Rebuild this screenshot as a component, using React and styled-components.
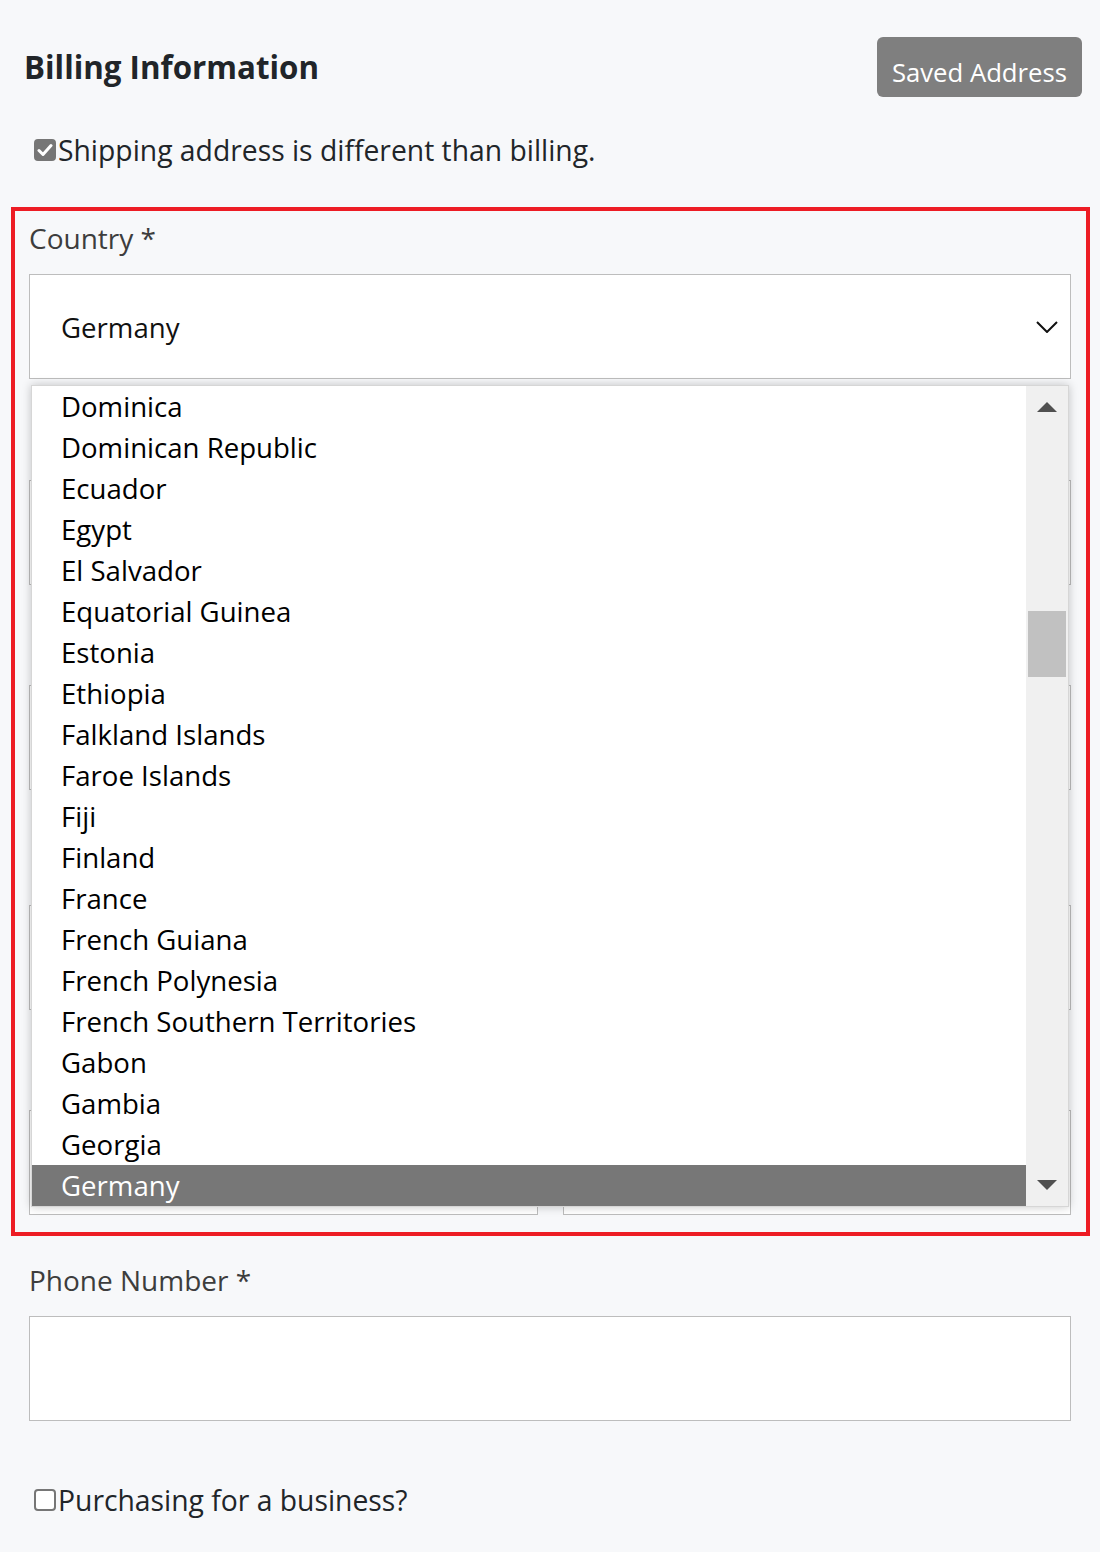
import React from 'react';
import styled, { createGlobalStyle } from 'styled-components';

const GlobalStyle = createGlobalStyle`
  * { box-sizing: border-box; }
  body {
    margin: 0;
    background: #f7f8fa;
    font-family: "Open Sans", "Noto Sans", sans-serif;
    color: #212529;
  }
`;

const Page = styled.div`
  min-height: 100vh;
  padding: 37px 10px 40px 11px;
`;

const Header = styled.div`
  display: flex;
  justify-content: space-between;
  align-items: center;
  height: 60px;
  padding: 0 8px 0 13px;
`;

const Title = styled.h2`
  margin: 0;
  font-size: 31.3px;
  font-weight: 700;
  color: #212529;
`;

const SavedButton = styled.button`
  height: 60px;
  padding: 10px 15px 0;
  border: none;
  border-radius: 6px;
  background: #7f7f7f;
  color: #fff;
  font-family: inherit;
  font-size: 25.7px;
`;

const CheckRow = styled.label`
  display: flex;
  align-items: center;
  height: 36px;
  margin-top: ${p => p.$top}px;
  padding-left: 23px;
  font-size: 28.3px;
  color: #212529;
`;

const Box = styled.span`
  width: 22px;
  height: 22px;
  margin-right: 2px;
  border-radius: 4px;
  display: flex;
  align-items: center;
  justify-content: center;
  background: ${p => (p.$checked ? '#767676' : '#fff')};
  border: 2px solid #767676;
`;

const Frame = styled.div`
  margin-top: 39px;
  border: 4px solid #ed1c24;
  padding: 8px 15px 17px 14px;
`;

const Section = styled.div`
  margin-top: 25px;
  padding: 0 19px 0 18px;
`;

const Group = styled.div`
  margin-top: ${p => p.$top || 0}px;
  position: relative;
`;

const Label = styled.label`
  display: block;
  height: 38px;
  font-size: 28px;
  line-height: 38px;
  margin-bottom: 17px;
  color: #3d3d3d;
`;

const Input = styled.div`
  height: 105px;
  border: 1px solid #bdbdbd;
  background: #fff;
`;

const Pair = styled.div`
  display: grid;
  grid-template-columns: 1fr 1fr;
  gap: 25px;
`;

const SelectBox = styled.div`
  position: relative;
  height: 105px;
  border: 1px solid #bdbdbd;
  background: #fff;
  display: flex;
  align-items: center;
  justify-content: space-between;
  padding: 0 12px 0 31px;
  font-size: 27.6px;
  color: #111;
`;

const DropList = styled.div`
  position: absolute;
  top: calc(100% + 7px);
  left: 1px;
  right: 1px;
  z-index: 5;
  display: flex;
  background: #fff;
  border: 1px solid #d6d6d6;
  box-shadow: 0 0 9px rgba(0, 0, 0, 0.22);
`;

const Options = styled.ul`
  flex: 1;
  list-style: none;
  margin: 0;
  padding: 0;
`;

const Option = styled.li`
  height: 41px;
  line-height: 41px;
  padding-left: 29px;
  font-size: 27.6px;
  color: ${p => (p.$selected ? '#fff' : '#000')};
  background: ${p => (p.$selected ? '#777' : 'transparent')};
`;

const Scrollbar = styled.div`
  width: 42px;
  background: #f0f0f0;
  display: flex;
  flex-direction: column;
`;

const ArrowButton = styled.div`
  height: 42px;
  display: flex;
  align-items: center;
  justify-content: center;
`;

const Triangle = styled.span`
  width: 0;
  height: 0;
  border-left: 10px solid transparent;
  border-right: 10px solid transparent;
  ${p => (p.$up ? 'border-bottom' : 'border-top')}: 10px solid #505050;
`;

const Track = styled.div`
  flex: 1;
  padding: 0 2px;
`;

const Thumb = styled.div`
  height: 66px;
  background: #c1c1c1;
`;

const countries = [
  'Dominica', 'Dominican Republic', 'Ecuador', 'Egypt', 'El Salvador',
  'Equatorial Guinea', 'Estonia', 'Ethiopia', 'Falkland Islands', 'Faroe Islands',
  'Fiji', 'Finland', 'France', 'French Guiana', 'French Polynesia',
  'French Southern Territories', 'Gabon', 'Gambia', 'Georgia', 'Germany',
];

function Check() {
  return (
    <svg width="16" height="14" viewBox="0 0 16 14">
      <path d="M2 7.5 L6 11.5 L14 2.5" fill="none" stroke="#fff" strokeWidth="3" strokeLinecap="round" strokeLinejoin="round" />
    </svg>
  );
}

function Chevron() {
  return (
    <svg width="22" height="12" viewBox="0 0 22 12">
      <polyline points="1,1 11,11 21,1" fill="none" stroke="#111" strokeWidth="2" />
    </svg>
  );
}

export default function App() {
  return (
    <Page>
      <GlobalStyle />
      <Header>
        <Title>Billing Information</Title>
        <SavedButton>Saved Address</SavedButton>
      </Header>

      <CheckRow $top={35}>
        <Box $checked><Check /></Box>
        Shipping address is different than billing.
      </CheckRow>

      <Frame>
        <Group>
          <Label>Country *</Label>
          <SelectBox>
            Germany
            <Chevron />
            <DropList>
              <Options>
                {countries.map(c => (
                  <Option key={c} $selected={c === 'Germany'}>{c}</Option>
                ))}
              </Options>
              <Scrollbar>
                <ArrowButton><Triangle $up /></ArrowButton>
                <Track>
                  <Thumb style={{ marginTop: 183 }} />
                </Track>
                <ArrowButton><Triangle /></ArrowButton>
              </Scrollbar>
            </DropList>
          </SelectBox>
        </Group>
        {/* fields under the open list: their labels are covered */}
        <Group $top={46}>
          <Label />
          <Input />
        </Group>
        <Group $top={45}>
          <Label />
          <Input />
        </Group>
        <Group $top={60}>
          <Label />
          <Input />
        </Group>
        <Group $top={45}>
          <Label />
          <Pair>
            <Input />
            <Input />
          </Pair>
        </Group>
      </Frame>

      <Section>
        <Label>Phone Number *</Label>
        <Input />
      </Section>

      <CheckRow $top={61}>
        <Box />
        Purchasing for a business?
      </CheckRow>
    </Page>
  );
}
